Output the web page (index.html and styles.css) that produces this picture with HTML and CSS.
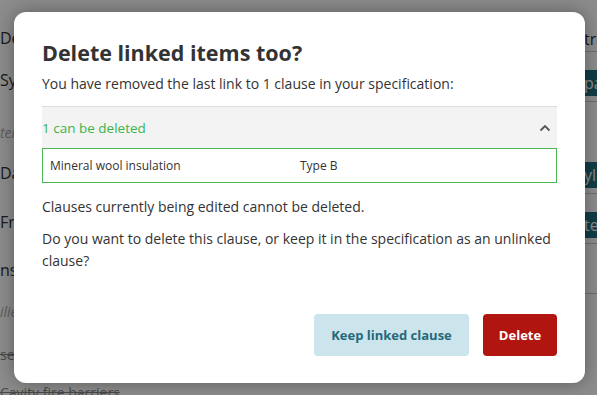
FILE: index.html
```html
<!DOCTYPE html>
<html>
<head>
<meta charset="utf-8">
<link rel="stylesheet" href="styles.css">
</head>
<body>
<div class="page">
  <div class="col-left">
    <div class="bg-row">De</div>
    <div class="bg-row gap-22">Sy</div>
    <div class="bg-row faint gap-33">ter</div>
    <div class="bg-row gap-20">Da</div>
    <div class="bg-row gap-29">Fra</div>
    <div class="bg-row gap-28">ns</div>
    <div class="bg-row faint gap-22">ilie</div>
    <div class="bg-row strike gap-23">se</div>
    <div class="bg-row strike gap-18">Cavity fire barriers</div>
  </div>
  <div class="col-right">
    <div class="bg-cell cell-a">tra</div>
    <div class="bg-cell cell-b"><span class="tag">pa</span></div>
    <div class="bg-cell cell-c"><span class="tag">yl</span></div>
    <div class="bg-cell cell-b"><span class="tag">te</span></div>
    <div class="bg-cell cell-b"></div>
  </div>
</div>
<div class="overlay"></div>
<div class="modal">
  <h1 class="title">Delete linked items too?</h1>
  <p class="intro">You have removed the last link to 1 clause in your specification:</p>
  <div class="accordion">
    <div class="acc-head">
      <span class="acc-label">1 can be deleted</span>
      <svg class="chev" width="12" height="8" viewBox="0 0 12 8"><path d="M1.5 6.5 L6 2 L10.5 6.5" fill="none" stroke="#555" stroke-width="1.8"/></svg>
    </div>
    <div class="acc-item">
      <span class="item-name">Mineral wool insulation</span>
      <span class="item-type">Type B</span>
    </div>
  </div>
  <p class="note">Clauses currently being edited cannot be deleted.</p>
  <p class="question">Do you want to delete this clause, or keep it in the specification as an unlinked clause?</p>
  <div class="actions">
    <button class="btn btn-keep">Keep linked clause</button>
    <button class="btn btn-delete">Delete</button>
  </div>
</div>
</body>
</html>
```
FILE: styles.css
```css
html, body {
  margin: 0;
  padding: 0;
}
body {
  width: 597px;
  height: 395px;
  overflow: hidden;
  position: relative;
  font-family: "Open Sans", "Noto Sans", sans-serif;
  background: #fff;
}
.page {
  display: flex;
  justify-content: space-between;
  height: 395px;
}
.col-left {
  display: flex;
  flex-direction: column;
  padding-top: 28px;
}
.bg-row {
  font-size: 16px;
  color: #333;
  height: 20px;
  line-height: 20px;
  white-space: nowrap;
}
.gap-18 { margin-top: 18px; }
.gap-20 { margin-top: 20px; }
.gap-22 { margin-top: 22px; }
.gap-23 { margin-top: 23px; }
.gap-28 { margin-top: 28px; }
.gap-29 { margin-top: 29px; }
.gap-33 { margin-top: 33px; }
.bg-row.faint {
  font-style: italic;
  color: #aaa;
  font-size: 14px;
}
.bg-row.strike {
  text-decoration: line-through;
  color: #888;
  font-size: 14px;
}
.col-right {
  display: flex;
  flex-direction: column;
  width: 47px;
  padding-top: 26px;
}
.bg-cell {
  border-bottom: 1px solid #c8c8c8;
  font-size: 16px;
  color: #333;
  box-sizing: border-box;
  white-space: nowrap;
  display: flex;
  align-items: flex-end;
  padding-bottom: 5px;
}
.cell-a {
  height: 26px;
  align-items: center;
  padding-bottom: 0;
  padding-left: 34px;
}
.cell-b { height: 50px; }
.cell-c { height: 92px; }
.tag {
  display: inline-block;
  background: #1f6f80;
  color: #fff;
  padding: 0 0 0 34px;
  line-height: 26px;
  width: 13px;
}
.overlay {
  position: absolute;
  inset: 0;
  background: rgba(0, 0, 0, 0.45);
}
.modal {
  position: absolute;
  left: 14px;
  top: 12px;
  width: 571px;
  height: 371px;
  box-sizing: border-box;
  background: #fff;
  border-radius: 12px;
  box-shadow: 0 0 18px rgba(0, 0, 0, 0.35);
  padding: 27px 28px 0 28px;
  display: flex;
  flex-direction: column;
  color: #333;
}
.title {
  margin: 0;
  font-size: 21.5px;
  font-weight: 700;
  line-height: 28px;
  color: #333;
}
.intro {
  margin: 7px 0 0 0;
  font-size: 14px;
  line-height: 20px;
  color: #333;
}
.accordion {
  margin-top: 12px;
  display: flex;
  flex-direction: column;
}
.acc-head {
  background: #f3f3f3;
  border-top: 1px solid #dcdcdc;
  height: 41px;
  display: flex;
  align-items: center;
  justify-content: space-between;
  padding: 0 6px 0 0;
}
.acc-label {
  color: #3bb54a;
  font-size: 13.5px;
}
.chev {
  display: block;
}
.acc-item {
  border: 1px solid #4cb855;
  height: 35px;
  box-sizing: border-box;
  display: flex;
  align-items: center;
  padding-left: 7px;
  font-size: 12px;
  color: #333;
}
.item-name {
  width: 250px;
}
.note {
  margin: 14px 0 0 0;
  font-size: 14px;
  line-height: 20px;
}
.question {
  margin: 11px 0 0 0;
  font-size: 14px;
  line-height: 22px;
}
.actions {
  margin-top: auto;
  margin-bottom: 27px;
  display: flex;
  justify-content: flex-end;
  gap: 14px;
}
.btn {
  height: 42px;
  border: none;
  border-radius: 4px;
  font-family: "Open Sans", "Noto Sans", sans-serif;
  font-weight: 700;
  font-size: 13px;
  padding: 0;
  white-space: nowrap;
}
.btn-keep {
  background: #cce4eb;
  color: #25697a;
  width: 155px;
}
.btn-delete {
  background: #b01510;
  color: #fff;
  width: 74px;
}
```
